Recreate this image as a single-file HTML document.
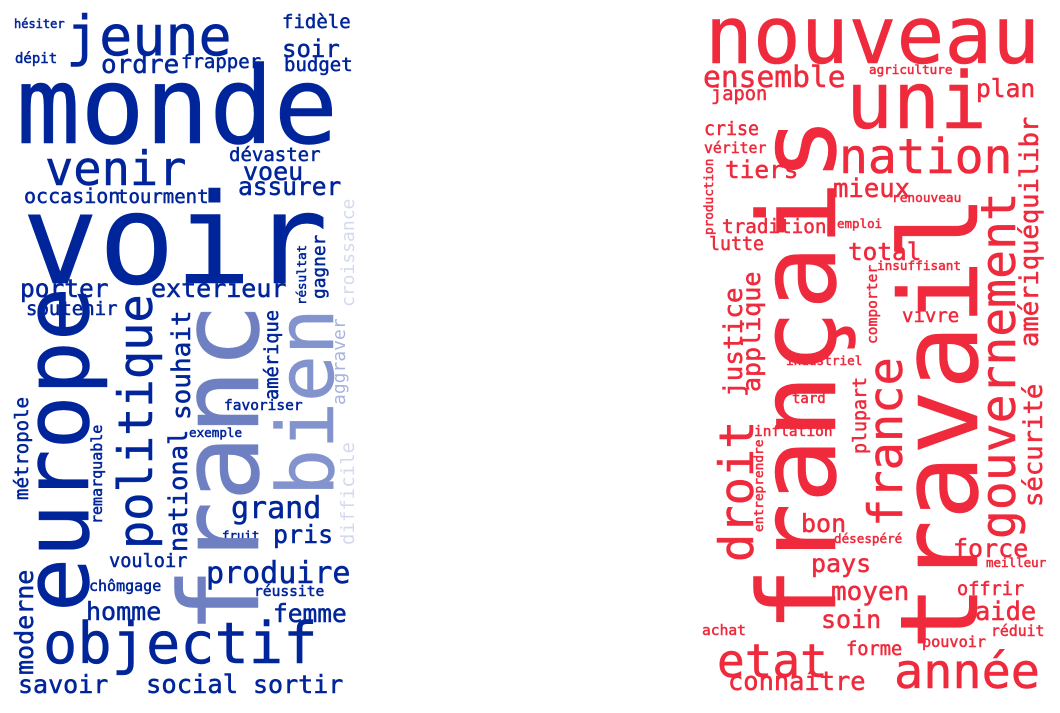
<!DOCTYPE html>
<html><head><meta charset="utf-8"><style>
html,body{margin:0;padding:0;background:#fff;width:1060px;height:713px;overflow:hidden}
svg{display:block}
text{font-family:"DejaVu Sans Mono","Liberation Mono",monospace;stroke-width:0.5px}
.b{fill:#00259a;stroke:#00259a}.r{fill:#ee2a3c;stroke:#ee2a3c}
</style></head><body>
<svg width="1060" height="713" viewBox="0 0 1060 713" xmlns="http://www.w3.org/2000/svg">
<g class="b">
<text x="14" y="28" font-size="12">hésiter</text>
<text x="15" y="63" font-size="14">dépit</text>
<text x="66" y="55" font-size="55">jeune</text>
<text x="282" y="28" font-size="19">fidèle</text>
<text x="282" y="57" font-size="24">soir</text>
<text x="101" y="73" font-size="26">ordre</text>
<text x="181" y="68" font-size="19">frapper</text>
<text x="284" y="71" font-size="19">budget</text>
<text x="16" y="143" font-size="107">monde</text>
<text x="45" y="185" font-size="47">venir</text>
<text x="229" y="161" font-size="19">dévaster</text>
<text x="243" y="180" font-size="25">voeu</text>
<text x="238" y="195" font-size="24.5">assurer</text>
<text x="24" y="203" font-size="20">occasion</text>
<text x="117" y="203" font-size="19">tourment</text>
<text x="22" y="283" font-size="125" textLength="306" lengthAdjust="spacingAndGlyphs">voir</text>
<text x="20" y="297" font-size="24.5">porter</text>
<text x="151" y="297" font-size="25">extérieur</text>
<text x="26" y="315" font-size="19">soutenir</text>
<text x="224" y="410" font-size="14.5">favoriser</text>
<text x="189" y="437" font-size="12.6">exemple</text>
<text x="231" y="518" font-size="30">grand</text>
<text x="273" y="543" font-size="25">pris</text>
<text x="222" y="540" font-size="12.4">fruit</text>
<text x="109" y="567" font-size="18.6">vouloir</text>
<text x="206" y="583" font-size="30">produire</text>
<text x="89" y="591" font-size="15">chômgage</text>
<text x="254" y="596" font-size="14.6">réussite</text>
<text x="86" y="620" font-size="25">homme</text>
<text x="273" y="622" font-size="24.5">femme</text>
<text x="43" y="663" font-size="57">objectif</text>
<text x="18" y="693" font-size="25">savoir</text>
<text x="146" y="693" font-size="25.5">social</text>
<text x="253" y="693" font-size="25">sortir</text>
<text x="88" y="612" font-size="90" transform="rotate(-90 88 612)">europe</text>
<text x="152" y="549" font-size="47" transform="rotate(-90 152 549)">politique</text>
<text x="187" y="552" font-size="25.4" transform="rotate(-90 187 552)">national</text>
<text x="190" y="420" font-size="26" transform="rotate(-90 190 420)">souhait</text>
<text x="278" y="400" font-size="18.7" transform="rotate(-90 278 400)">amérique</text>
<text x="306" y="305" font-size="12.5" transform="rotate(-90 306 305)">résultat</text>
<text x="325" y="299" font-size="17.8" transform="rotate(-90 325 299)">gagner</text>
<text x="28" y="500" font-size="19" transform="rotate(-90 28 500)">métropole</text>
<text x="102" y="524" font-size="15" transform="rotate(-90 102 524)">remarquable</text>
<text x="33" y="675" font-size="25" transform="rotate(-90 33 675)">moderne</text>
</g>
<text x="354" y="307" font-size="18" fill="#d4daee" transform="rotate(-90 354 307)">croissance</text>
<text x="354" y="545" font-size="19" fill="#d4daee" transform="rotate(-90 354 545)">difficile</text>
<text x="345" y="405" font-size="18" fill="#a9b4dc" transform="rotate(-90 345 405)">aggraver</text>
<text x="258" y="634" font-size="110" fill="#6f80c2" stroke="#6f80c2" transform="rotate(-90 258 634)">franc</text>
<text x="333" y="496" font-size="78" fill="#8393cd" stroke="#8393cd" transform="rotate(-90 333 496)">bien</text>

<g class="r">
<text x="705" y="63" font-size="79.5">nouveau</text>
<text x="703" y="87" font-size="29.6">ensemble</text>
<text x="869" y="74" font-size="12.6">agriculture</text>
<text x="846" y="128" font-size="78">uni</text>
<text x="976" y="97" font-size="24.6">plan</text>
<text x="711" y="100" font-size="18.7">japon</text>
<text x="704" y="135" font-size="18.3">crise</text>
<text x="704" y="153" font-size="14.8">vériter</text>
<text x="839" y="173" font-size="48">nation</text>
<text x="725" y="178" font-size="24.4">tiers</text>
<text x="833" y="197" font-size="25.6">mieux</text>
<text x="892" y="202" font-size="12.8">renouveau</text>
<text x="837" y="228" font-size="12.5">emploi</text>
<text x="722" y="233" font-size="19.3">tradition</text>
<text x="709" y="250" font-size="18.3">lutte</text>
<text x="848" y="260" font-size="24.4">total</text>
<text x="877" y="270" font-size="12.7">insuffisant</text>
<text x="902" y="322" font-size="19">vivre</text>
<text x="786" y="365" font-size="12.7">industriel</text>
<text x="792" y="403" font-size="14">tard</text>
<text x="754" y="436" font-size="14.5">inflation</text>
<text x="801" y="532" font-size="25">bon</text>
<text x="834" y="543" font-size="12.6">désespéré</text>
<text x="953" y="557" font-size="25">force</text>
<text x="986" y="567" font-size="12.5">meilleur</text>
<text x="811" y="572" font-size="25">pays</text>
<text x="957" y="595" font-size="18.6">offrir</text>
<text x="831" y="600" font-size="26">moyen</text>
<text x="975" y="620" font-size="25.4">aide</text>
<text x="821" y="628" font-size="25">soin</text>
<text x="702" y="635" font-size="14.6">achat</text>
<text x="991" y="636" font-size="14.8">réduit</text>
<text x="717" y="677" font-size="46">etat</text>
<text x="846" y="655" font-size="18.7">forme</text>
<text x="922" y="647" font-size="15.2">pouvoir</text>
<text x="894" y="688" font-size="48.5">année</text>
<text x="728" y="690" font-size="25.4">connaître</text>
<text x="835" y="632" font-size="107" transform="rotate(-90 835 632)">français</text>
<text x="977" y="650" font-size="108" transform="rotate(-90 977 650)">travail</text>
<text x="1015" y="539" font-size="48" transform="rotate(-90 1015 539)">gouvernement</text>
<text x="1038" y="347" font-size="25.5" transform="rotate(-90 1038 347)">amériquéquilibr</text>
<text x="1042" y="507" font-size="25.6" transform="rotate(-90 1042 507)">sécurité</text>
<text x="902" y="527" font-size="47" transform="rotate(-90 902 527)">france</text>
<text x="866" y="454" font-size="18.3" transform="rotate(-90 866 454)">plupart</text>
<text x="753" y="562" font-size="47" transform="rotate(-90 753 562)">droit</text>
<text x="742" y="397" font-size="26" transform="rotate(-90 742 397)">justice</text>
<text x="760" y="392" font-size="25" transform="rotate(-90 760 392)">applique</text>
<text x="877" y="344" font-size="14.6" transform="rotate(-90 877 344)">comporter</text>
<text x="713" y="235" font-size="12.7" transform="rotate(-90 713 235)">production</text>
<text x="763" y="532" font-size="12.8" transform="rotate(-90 763 532)">entreprendre</text>
</g>
</svg>
</body></html>
